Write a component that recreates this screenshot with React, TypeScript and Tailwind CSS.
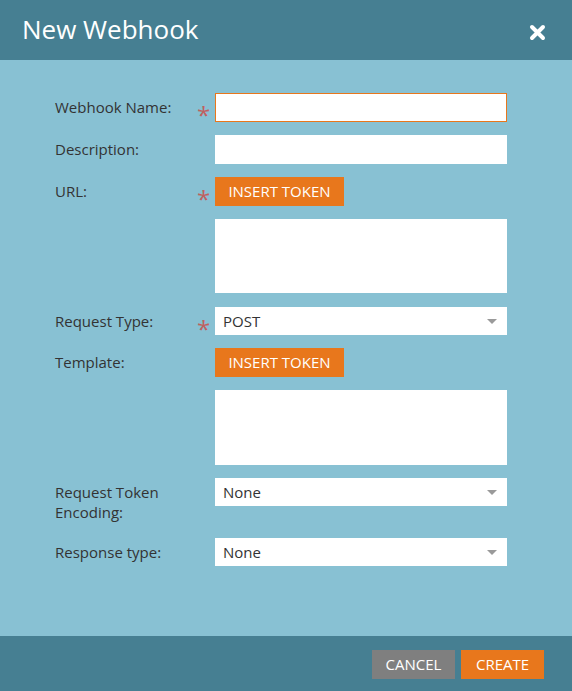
const font = { fontFamily: '"Open Sans", "Liberation Sans", sans-serif' }

function Star() {
  return (
    <span className="w-[20px] h-[28px] shrink-0 text-[24px] leading-none text-[#c0605e] pt-[10px] pl-[2px] overflow-visible">*</span>
  )
}

function Row({ label, required, children }: { label: React.ReactNode; required?: boolean; children: React.ReactNode }) {
  return (
    <div className="flex items-start">
      <div className="w-[140px] shrink-0 pt-[4px] text-[15px] leading-[20px] text-[#333333]">{label}</div>
      {required ? <Star /> : <span className="w-[20px] shrink-0" />}
      <div className="w-[292px] flex flex-col gap-[13px]">{children}</div>
    </div>
  )
}

function Select({ value }: { value: string }) {
  return (
    <div className="h-[28px] bg-white flex items-center justify-between pl-[8px] pr-[10px] text-[15px] text-[#333333]">
      <span>{value}</span>
      <span className="w-0 h-0 border-l-[5px] border-r-[5px] border-t-[5px] border-l-transparent border-r-transparent border-t-[#9a9a9a]" />
    </div>
  )
}

function TokenButton() {
  return (
    <button className="w-[129px] h-[29px] bg-[#e8771c] text-white text-[15px] uppercase">Insert Token</button>
  )
}

export default function App() {
  return (
    <div className="w-[572px] h-[691px] flex flex-col bg-[#88c1d3]" style={font}>
      <div className="h-[60px] shrink-0 bg-[#467f92] flex items-center justify-between pl-[22px] pr-[26px]">
        <h1 className="text-[26px] text-white pb-[2px]">New Webhook</h1>
        <svg width="17" height="17" viewBox="0 0 17 17" className="mt-[4px]">
          <path d="M3 3 L14 14 M14 3 L3 14" stroke="white" strokeWidth="4" strokeLinecap="round" />
        </svg>
      </div>

      <div className="flex-1 pt-[33px] pl-[55px] flex flex-col gap-[13px]">
        <Row label="Webhook Name:" required>
          <input className="h-[29px] bg-white border border-[#e8771c] outline-none" />
        </Row>
        <Row label="Description:">
          <input className="h-[29px] bg-white outline-none" />
        </Row>
        <Row label="URL:" required>
          <TokenButton />
          <textarea className="h-[74px] bg-white resize-none outline-none" />
        </Row>
        <div className="pt-[1px]">
          <Row label="Request Type:" required>
            <Select value="POST" />
          </Row>
        </div>
        <Row label="Template:">
          <TokenButton />
          <textarea className="h-[75px] bg-white resize-none outline-none" />
        </Row>
        <div className="pb-[3px]">
          <Row label={<>Request Token<br />Encoding:</>}>
            <Select value="None" />
          </Row>
        </div>
        <Row label="Response type:">
          <Select value="None" />
        </Row>
      </div>

      <div className="h-[55px] shrink-0 bg-[#467f92] flex items-center justify-end gap-[6px] pr-[28px] pt-[2px]">
        <button className="w-[83px] h-[29px] bg-[#7f7f7f] text-white text-[15px] uppercase">Cancel</button>
        <button className="w-[83px] h-[29px] bg-[#e8771c] text-white text-[15px] uppercase">Create</button>
      </div>
    </div>
  )
}
